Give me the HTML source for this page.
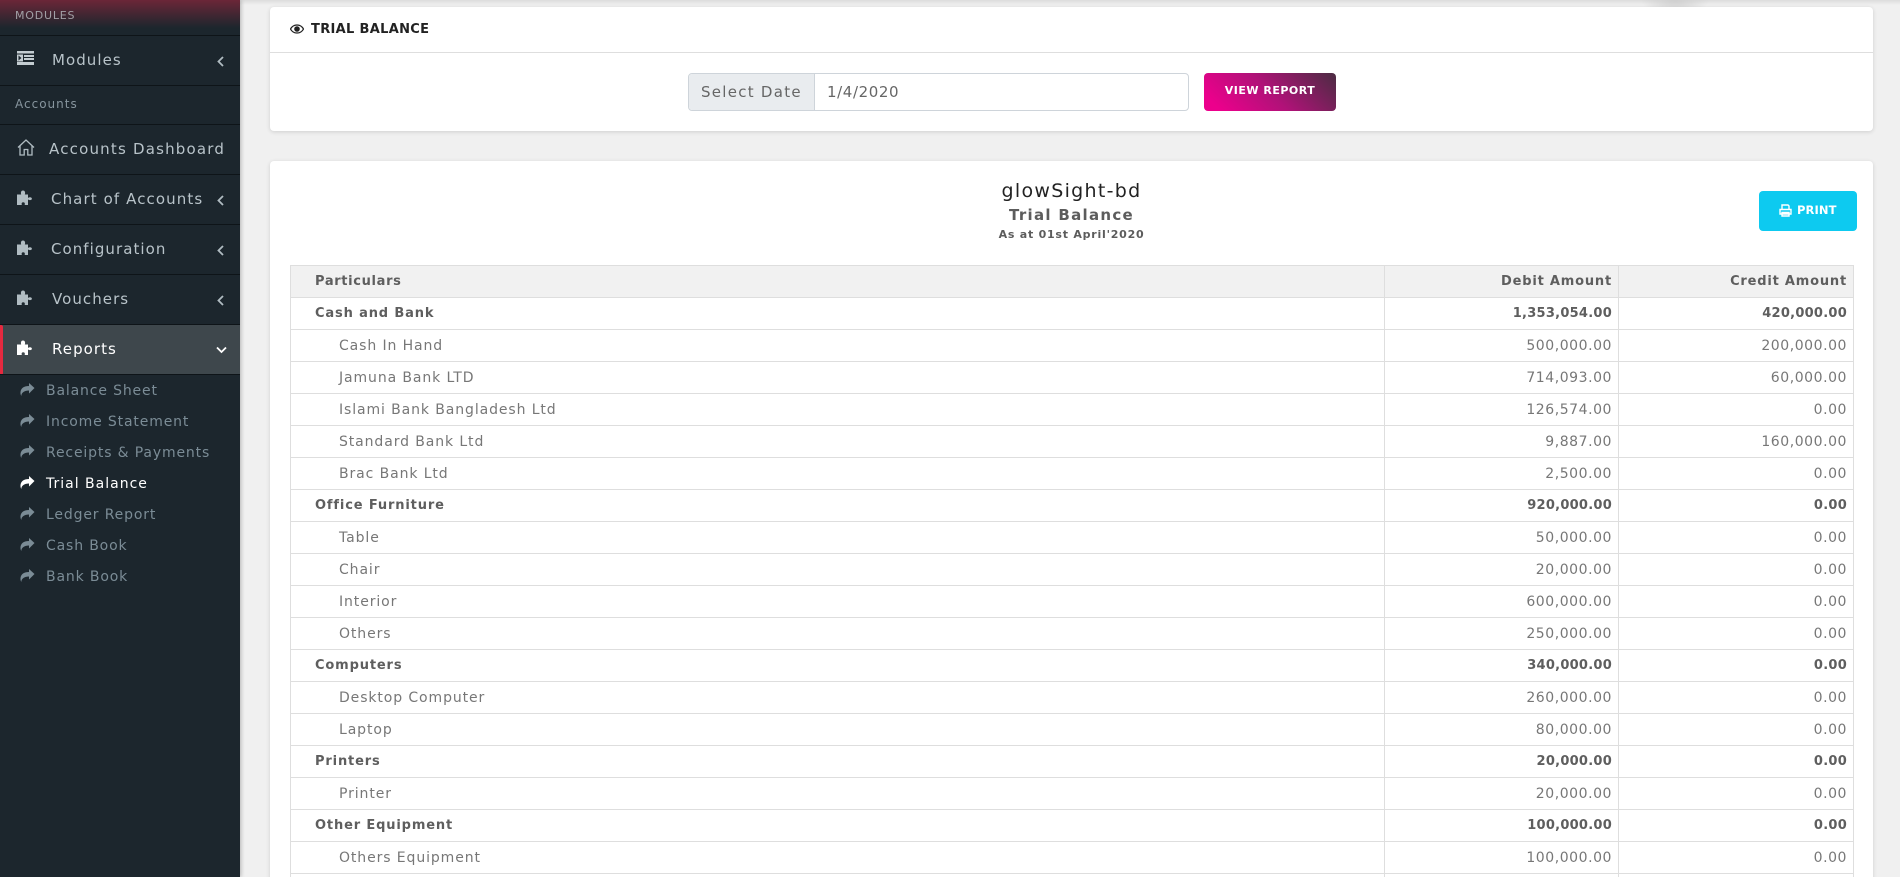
<!DOCTYPE html>
<html lang="en"><head><meta charset="utf-8"><title>Trial Balance</title>
<style>
*{box-sizing:border-box}
html,body{margin:0;padding:0;width:1900px;height:877px;overflow:hidden;background:#f0f0f0;font-family:"DejaVu Sans","Liberation Sans",sans-serif}
#wrap{position:relative;width:1900px;height:877px;overflow:hidden;background:#f0f0f0}
.abs,.side .i,.side .t,.side .lb,.side .ln{position:absolute}
.side{position:absolute;left:0;top:0;width:240px;height:877px;background:#1c262d;box-shadow:1px 0 4px rgba(0,0,0,.25);overflow:hidden;z-index:3}
.side .grad{position:absolute;left:0;top:0;width:240px;height:28px;background:linear-gradient(#6b2638,#1c262d)}
.side .ln{left:0;width:240px;height:1px;background:#0e1418}
.side .t{white-space:nowrap;color:#b8c3c9;font-size:15px;letter-spacing:1.05px;line-height:20px}
.side .lb{white-space:nowrap;color:#87959e;font-size:12px;letter-spacing:1px;line-height:14px}
.side .s{position:absolute;left:46px;white-space:nowrap;color:#7b8c96;font-size:14px;letter-spacing:.85px;line-height:18px}
.side svg{position:absolute}
.act{position:absolute;left:0;top:325px;width:240px;height:49px;background:#3e474c}
.bar{position:absolute;left:0;top:325px;width:3px;height:50px;background:#e5293f;border-radius:0 2px 2px 0}
.topsh{position:absolute;left:240px;top:0;width:1660px;height:5px;background:linear-gradient(#dcdcdc,#f0f0f0)}
.blob{position:absolute;left:1640px;top:0;width:70px;height:14px;background:radial-gradient(ellipse at 50% 0,#cfcfcf,rgba(240,240,240,0) 70%)}
.card{position:absolute;left:270px;width:1603px;background:#fff;border-radius:4px;box-shadow:0 1px 4px rgba(0,0,0,.14)}
table{position:absolute;left:290px;top:265px;width:1563px;border-collapse:collapse;table-layout:fixed;font-size:14px;letter-spacing:.55px;color:#777}
td,th{height:32px;padding:0 6px 0 6px;border:1px solid #dedede;font-weight:400;text-align:right;white-space:nowrap;overflow:hidden}
td:first-child,th:first-child{text-align:left;padding-left:48px;letter-spacing:.9px}
th,tr.b td{font-weight:700;color:#5e5e5e;font-size:13px;letter-spacing:.25px}
th{background:#f1f1f1;letter-spacing:.8px}
th:first-child{padding-left:24px;letter-spacing:.65px}
tr.b td:first-child{padding-left:24px;letter-spacing:.85px}
</style></head><body>
<div id="wrap">
<div class="topsh"></div><div class="blob"></div>

<div class="side">
<div class="grad"></div>
<div class="lb" style="left:15px;top:9px;font-size:11px;letter-spacing:.8px;color:#a2a0a6">MODULES</div>
<div class="ln" style="top:35px"></div>
<svg style="left:17px;top:51px" width="18" height="15" viewBox="0 0 18 15" fill="#c3ccd1"><path d="M0 0h17v2.500H0zM7 4h10v2H7zM7 7h10v2H7zM0 11h17v3H0zM0 3.500h6V10.500H0zM1.500 4.500v5L4.500 7z" fill-rule="evenodd"/></svg>
<div class="t" style="left:52px;top:49.500px">Modules</div>
<svg style="left:217px;top:56px" width="7" height="11" viewBox="0 0 7 11"><path d="M6 1L1.500 5.500 6 10" fill="none" stroke="#b0bcc2" stroke-width="1.800"/></svg>
<div class="ln" style="top:85px"></div>
<div class="lb" style="left:15px;top:97px">Accounts</div>
<div class="ln" style="top:124px"></div>
<svg style="left:17px;top:139px" width="18" height="17" viewBox="0 0 18 17"><path d="M1 8.500L9 1l8 7.500M3 7v9h4.200v-5.500h3.600V16H15V7" fill="none" stroke="#b0bcc2" stroke-width="1.300"/></svg>
<div class="t" style="left:49px;top:139px;letter-spacing:1.2px">Accounts Dashboard</div>
<div class="ln" style="top:174px"></div>
<svg style="left:17px;top:190px" width="17" height="16" viewBox="0 0 17 16" fill="#b0bcc2"><path d="M0 4.500h4.200C3.600 3 3.800.5 6 .5S8.500 3 7.800 4.500H11V8c1-.8 2.500-1 3.300-.4.800.7.800 1.600 0 2.200-.8.600-2.300.400-3.300-.4V15H7.600c.5-1 .4-2.800-1.400-2.800S4.400 14 4.900 15H0z"/></svg>
<div class="t" style="left:51px;top:189px;letter-spacing:1.1px">Chart of Accounts</div>
<svg style="left:217px;top:195px" width="7" height="11" viewBox="0 0 7 11"><path d="M6 1L1.500 5.500 6 10" fill="none" stroke="#b0bcc2" stroke-width="1.800"/></svg>
<div class="ln" style="top:224px"></div>
<svg style="left:17px;top:240px" width="17" height="16" viewBox="0 0 17 16" fill="#b0bcc2"><path d="M0 4.500h4.200C3.600 3 3.800.5 6 .5S8.500 3 7.800 4.500H11V8c1-.8 2.500-1 3.300-.4.800.7.800 1.600 0 2.200-.8.600-2.300.400-3.300-.4V15H7.600c.5-1 .4-2.800-1.400-2.800S4.400 14 4.900 15H0z"/></svg>
<div class="t" style="left:51px;top:238.500px">Configuration</div>
<svg style="left:217px;top:245px" width="7" height="11" viewBox="0 0 7 11"><path d="M6 1L1.500 5.500 6 10" fill="none" stroke="#b0bcc2" stroke-width="1.800"/></svg>
<div class="ln" style="top:274px"></div>
<svg style="left:17px;top:290px" width="17" height="16" viewBox="0 0 17 16" fill="#b0bcc2"><path d="M0 4.500h4.200C3.600 3 3.800.5 6 .5S8.500 3 7.800 4.500H11V8c1-.8 2.500-1 3.300-.4.800.7.800 1.600 0 2.200-.8.600-2.300.400-3.300-.4V15H7.600c.5-1 .4-2.800-1.400-2.800S4.400 14 4.900 15H0z"/></svg>
<div class="t" style="left:52px;top:289px">Vouchers</div>
<svg style="left:217px;top:295px" width="7" height="11" viewBox="0 0 7 11"><path d="M6 1L1.500 5.500 6 10" fill="none" stroke="#b0bcc2" stroke-width="1.800"/></svg>
<div class="ln" style="top:324px"></div>
<div class="act"></div><div class="bar"></div>
<svg style="left:17px;top:340px" width="17" height="16" viewBox="0 0 17 16" fill="#fff"><path d="M0 4.500h4.200C3.600 3 3.800.5 6 .5S8.500 3 7.800 4.500H11V8c1-.8 2.500-1 3.300-.4.800.7.800 1.600 0 2.200-.8.600-2.300.400-3.300-.4V15H7.600c.5-1 .4-2.800-1.400-2.800S4.400 14 4.900 15H0z"/></svg>
<div class="t" style="left:52px;top:338.500px;color:#fff">Reports</div>
<svg style="left:216px;top:346px" width="11" height="8" viewBox="0 0 11 8"><path d="M1 1.500L5.500 6 10 1.500" fill="none" stroke="#fff" stroke-width="1.800"/></svg>
<div class="ln" style="top:374px"></div>

<svg style="left:20px;top:383px" width="15" height="14" viewBox="0 0 15 14" fill="#7b8c96"><path d="M14.500 5L9 0v3C4 3 1 5 .5 9c-.2 1.500.2 3 .8 4 .2-3.500 3-5.500 7.700-5.500V10.500z"/></svg>
<div class="s" style="top:382px">Balance Sheet</div>
<svg style="left:20px;top:414px" width="15" height="14" viewBox="0 0 15 14" fill="#7b8c96"><path d="M14.500 5L9 0v3C4 3 1 5 .5 9c-.2 1.500.2 3 .8 4 .2-3.500 3-5.500 7.700-5.500V10.500z"/></svg>
<div class="s" style="top:413px">Income Statement</div>
<svg style="left:20px;top:445px" width="15" height="14" viewBox="0 0 15 14" fill="#7b8c96"><path d="M14.500 5L9 0v3C4 3 1 5 .5 9c-.2 1.500.2 3 .8 4 .2-3.500 3-5.500 7.700-5.500V10.500z"/></svg>
<div class="s" style="top:444px">Receipts &amp; Payments</div>
<svg style="left:20px;top:476px" width="15" height="14" viewBox="0 0 15 14" fill="#fff"><path d="M14.500 5L9 0v3C4 3 1 5 .5 9c-.2 1.500.2 3 .8 4 .2-3.500 3-5.500 7.700-5.500V10.500z"/></svg>
<div class="s" style="top:475px;color:#fff;letter-spacing:1px">Trial Balance</div>
<svg style="left:20px;top:507px" width="15" height="14" viewBox="0 0 15 14" fill="#7b8c96"><path d="M14.500 5L9 0v3C4 3 1 5 .5 9c-.2 1.500.2 3 .8 4 .2-3.500 3-5.500 7.700-5.500V10.500z"/></svg>
<div class="s" style="top:506px">Ledger Report</div>
<svg style="left:20px;top:538px" width="15" height="14" viewBox="0 0 15 14" fill="#7b8c96"><path d="M14.500 5L9 0v3C4 3 1 5 .5 9c-.2 1.500.2 3 .8 4 .2-3.500 3-5.500 7.700-5.500V10.500z"/></svg>
<div class="s" style="top:537px">Cash Book</div>
<svg style="left:20px;top:569px" width="15" height="14" viewBox="0 0 15 14" fill="#7b8c96"><path d="M14.500 5L9 0v3C4 3 1 5 .5 9c-.2 1.500.2 3 .8 4 .2-3.500 3-5.500 7.700-5.500V10.500z"/></svg>
<div class="s" style="top:568px">Bank Book</div>
</div>

<div class="card" style="top:7px;height:124px"></div>
<div class="abs" style="left:270px;top:52px;width:1603px;height:1px;background:#dedede"></div>
<svg class="abs" style="left:290px;top:23px" width="14" height="12" viewBox="0 0 14 12"><path d="M.5 6C2 3.300 4.300 2 7 2s5 1.300 6.500 4C12 8.700 9.700 10 7 10S2 8.700.5 6z" fill="none" stroke="#222" stroke-width="1.200"/><circle cx="7" cy="6" r="2.800" fill="#222"/></svg>
<div class="abs" style="left:311px;top:21px;font-size:13px;font-weight:700;letter-spacing:.32px;color:#222;line-height:18px;white-space:nowrap">TRIAL BALANCE</div>

<div class="abs" style="left:688px;top:73px;width:501px;height:38px;border:1px solid #ced4da;border-radius:4px;overflow:hidden;background:#fff">
<div class="abs" style="left:0;top:0;width:126px;height:36px;background:#e9ecef;border-right:1px solid #ced4da;color:#666;font-size:15px;letter-spacing:1.27px;line-height:36px;padding-left:12px;white-space:nowrap">Select Date</div>
<div class="abs" style="left:138px;top:0;height:36px;color:#666;font-size:15px;letter-spacing:.6px;line-height:36px;white-space:nowrap">1/4/2020</div>
</div>
<div class="abs" style="left:1204px;top:73px;width:132px;height:38px;border-radius:4px;background:linear-gradient(45deg,#ec008c 10%,#b01278 50%,#4b2c42 100%);color:#fff;font-size:11px;font-weight:700;letter-spacing:.5px;line-height:35px;text-align:center;white-space:nowrap">VIEW REPORT</div>

<div class="card" style="top:161px;height:730px"></div>
<div class="abs" style="left:270px;width:1603px;text-align:center;top:179px;font-size:19px;letter-spacing:1.3px;color:#222;line-height:24px">glowSight-bd</div>
<div class="abs" style="left:270px;width:1603px;text-align:center;top:205px;font-size:15px;font-weight:700;letter-spacing:1.3px;color:#5c5c5c;line-height:20px">Trial Balance</div>
<div class="abs" style="left:270px;width:1603px;text-align:center;top:227px;font-size:11px;font-weight:700;letter-spacing:.77px;color:#5c5c5c;line-height:16px">As at 01st April'2020</div>

<div class="abs" style="left:1759px;top:191px;width:98px;height:40px;border-radius:4px;background:#0dcaf0"></div>
<svg class="abs" style="left:1779px;top:204px" width="13" height="13" viewBox="0 0 13 13"><path d="M3 5V1h6l1 1v3M1 5.500h11V10H1zM3 8.500h7V12H3z" fill="none" stroke="#fff" stroke-width="1.400"/></svg>
<div class="abs" style="left:1797px;top:202px;font-size:11.500px;font-weight:700;letter-spacing:.1px;color:#fff;line-height:16px">PRINT</div>

<table>
<colgroup><col style="width:1094px"><col style="width:234px"><col style="width:235px"></colgroup>
<tr><th>Particulars</th><th>Debit Amount</th><th>Credit Amount</th></tr>
<tr class="b"><td>Cash and Bank</td><td>1,353,054.00</td><td>420,000.00</td></tr>
<tr><td>Cash In Hand</td><td>500,000.00</td><td>200,000.00</td></tr>
<tr><td>Jamuna Bank LTD</td><td>714,093.00</td><td>60,000.00</td></tr>
<tr><td>Islami Bank Bangladesh Ltd</td><td>126,574.00</td><td>0.00</td></tr>
<tr><td>Standard Bank Ltd</td><td>9,887.00</td><td>160,000.00</td></tr>
<tr><td>Brac Bank Ltd</td><td>2,500.00</td><td>0.00</td></tr>
<tr class="b"><td>Office Furniture</td><td>920,000.00</td><td>0.00</td></tr>
<tr><td>Table</td><td>50,000.00</td><td>0.00</td></tr>
<tr><td>Chair</td><td>20,000.00</td><td>0.00</td></tr>
<tr><td>Interior</td><td>600,000.00</td><td>0.00</td></tr>
<tr><td>Others</td><td>250,000.00</td><td>0.00</td></tr>
<tr class="b"><td>Computers</td><td>340,000.00</td><td>0.00</td></tr>
<tr><td>Desktop Computer</td><td>260,000.00</td><td>0.00</td></tr>
<tr><td>Laptop</td><td>80,000.00</td><td>0.00</td></tr>
<tr class="b"><td>Printers</td><td>20,000.00</td><td>0.00</td></tr>
<tr><td>Printer</td><td>20,000.00</td><td>0.00</td></tr>
<tr class="b"><td>Other Equipment</td><td>100,000.00</td><td>0.00</td></tr>
<tr><td>Others Equipment</td><td>100,000.00</td><td>0.00</td></tr>
<tr><td></td><td></td><td></td></tr>
</table>
</div>
</body></html>
